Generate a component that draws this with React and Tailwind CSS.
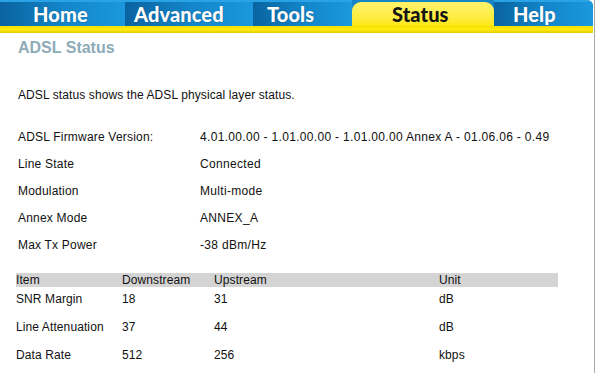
import React from "react";

const tabs = [
  { name: "Home", w: "w-[125px]", pl: "pl-[33px]" },
  { name: "Advanced", w: "w-[128px]", pl: "pl-[9px]" },
  { name: "Tools", w: "w-[99px]", pl: "pl-[14px]" },
  { name: "Status", w: "w-[142px]", pl: "pl-[40px]", active: true },
  { name: "Help", w: "w-[99px]", pl: "pl-[19px]" },
];

const info = [
  ["ADSL Firmware Version:", "4.01.00.00 - 1.01.00.00 - 1.01.00.00 Annex A - 01.06.06 - 0.49"],
  ["Line State", "Connected"],
  ["Modulation", "Multi-mode"],
  ["Annex Mode", "ANNEX_A"],
  ["Max Tx Power", "-38 dBm/Hz"],
];

const stats = [
  ["SNR Margin", "18", "31", "dB"],
  ["Line Attenuation", "37", "44", "dB"],
  ["Data Rate", "512", "256", "kbps"],
];

const TabBar = () => (
  <div className="w-[593px]">
    <div className="flex h-[26px] bg-[#1585c6] rounded-tr-[6px] overflow-hidden">
      {tabs.map((t) =>
        t.active ? (
          <div
            key={t.name}
            className={`${t.w} ${t.pl} mt-[2px] flex items-center rounded-t-[9px] bg-gradient-to-b from-[#fff46a] to-[#fde80c] text-[#141414] font-black text-[20px] leading-none font-['Lato',sans-serif]`}
          >
            {t.name}
          </div>
        ) : (
          <div
            key={t.name}
            className={`${t.w} ${t.pl} flex items-center bg-gradient-to-r from-[#0a63a0] via-[#1385c8] to-[#1b98de] border-t-2 border-[#2aa3e6] text-white font-black text-[20px] leading-none font-['Lato',sans-serif] [text-shadow:0_0_1px_#0a4a7a]`}
          >
            {t.name}
          </div>
        )
      )}
    </div>
    <div className="h-[7px] bg-gradient-to-b from-[#f4e000] via-[#fdeb10] to-[#e8cc00]" />
  </div>
);

const App = () => {
  return (
    <div className="w-[596px] h-[373px] bg-white overflow-hidden font-['Liberation_Sans',Arial,sans-serif] text-[12px] tracking-[0.1px] text-[#111]">
      <div className="w-[595px] h-full border-r border-[#a9a9a9]">
        <TabBar />

        <div className="h-[30px] flex items-center pl-[18px] text-[16px] font-bold tracking-normal text-[#8eabb7]">
          ADSL Status
        </div>

        <div className="mt-[22px] h-[20px] flex items-center pl-[18px]">
          ADSL status shows the ADSL physical layer status.
        </div>

        <div className="mt-[18px] pl-[18px]">
          {info.map(([label, value]) => (
            <div key={label} className="flex h-[27px] items-center">
              <div className="w-[182px] tracking-[0.2px]">{label}</div>
              <div className="tracking-[0.32px]">{value}</div>
            </div>
          ))}
        </div>

        <div className="mt-[15px] ml-[16px] w-[542px]">
          <div className="flex h-[14px] items-center bg-[#d4d4d4] leading-none">
            <div className="w-[106px]">Item</div>
            <div className="w-[92px]">Downstream</div>
            <div className="w-[225px]">Upstream</div>
            <div>Unit</div>
          </div>
          {stats.map(([item, down, up, unit]) => (
            <div key={item} className="flex h-[28px] pt-[5px] leading-[14px]">
              <div className="w-[106px]">{item}</div>
              <div className="w-[92px]">{down}</div>
              <div className="w-[225px]">{up}</div>
              <div>{unit}</div>
            </div>
          ))}
        </div>
      </div>
    </div>
  );
};

export default App;
